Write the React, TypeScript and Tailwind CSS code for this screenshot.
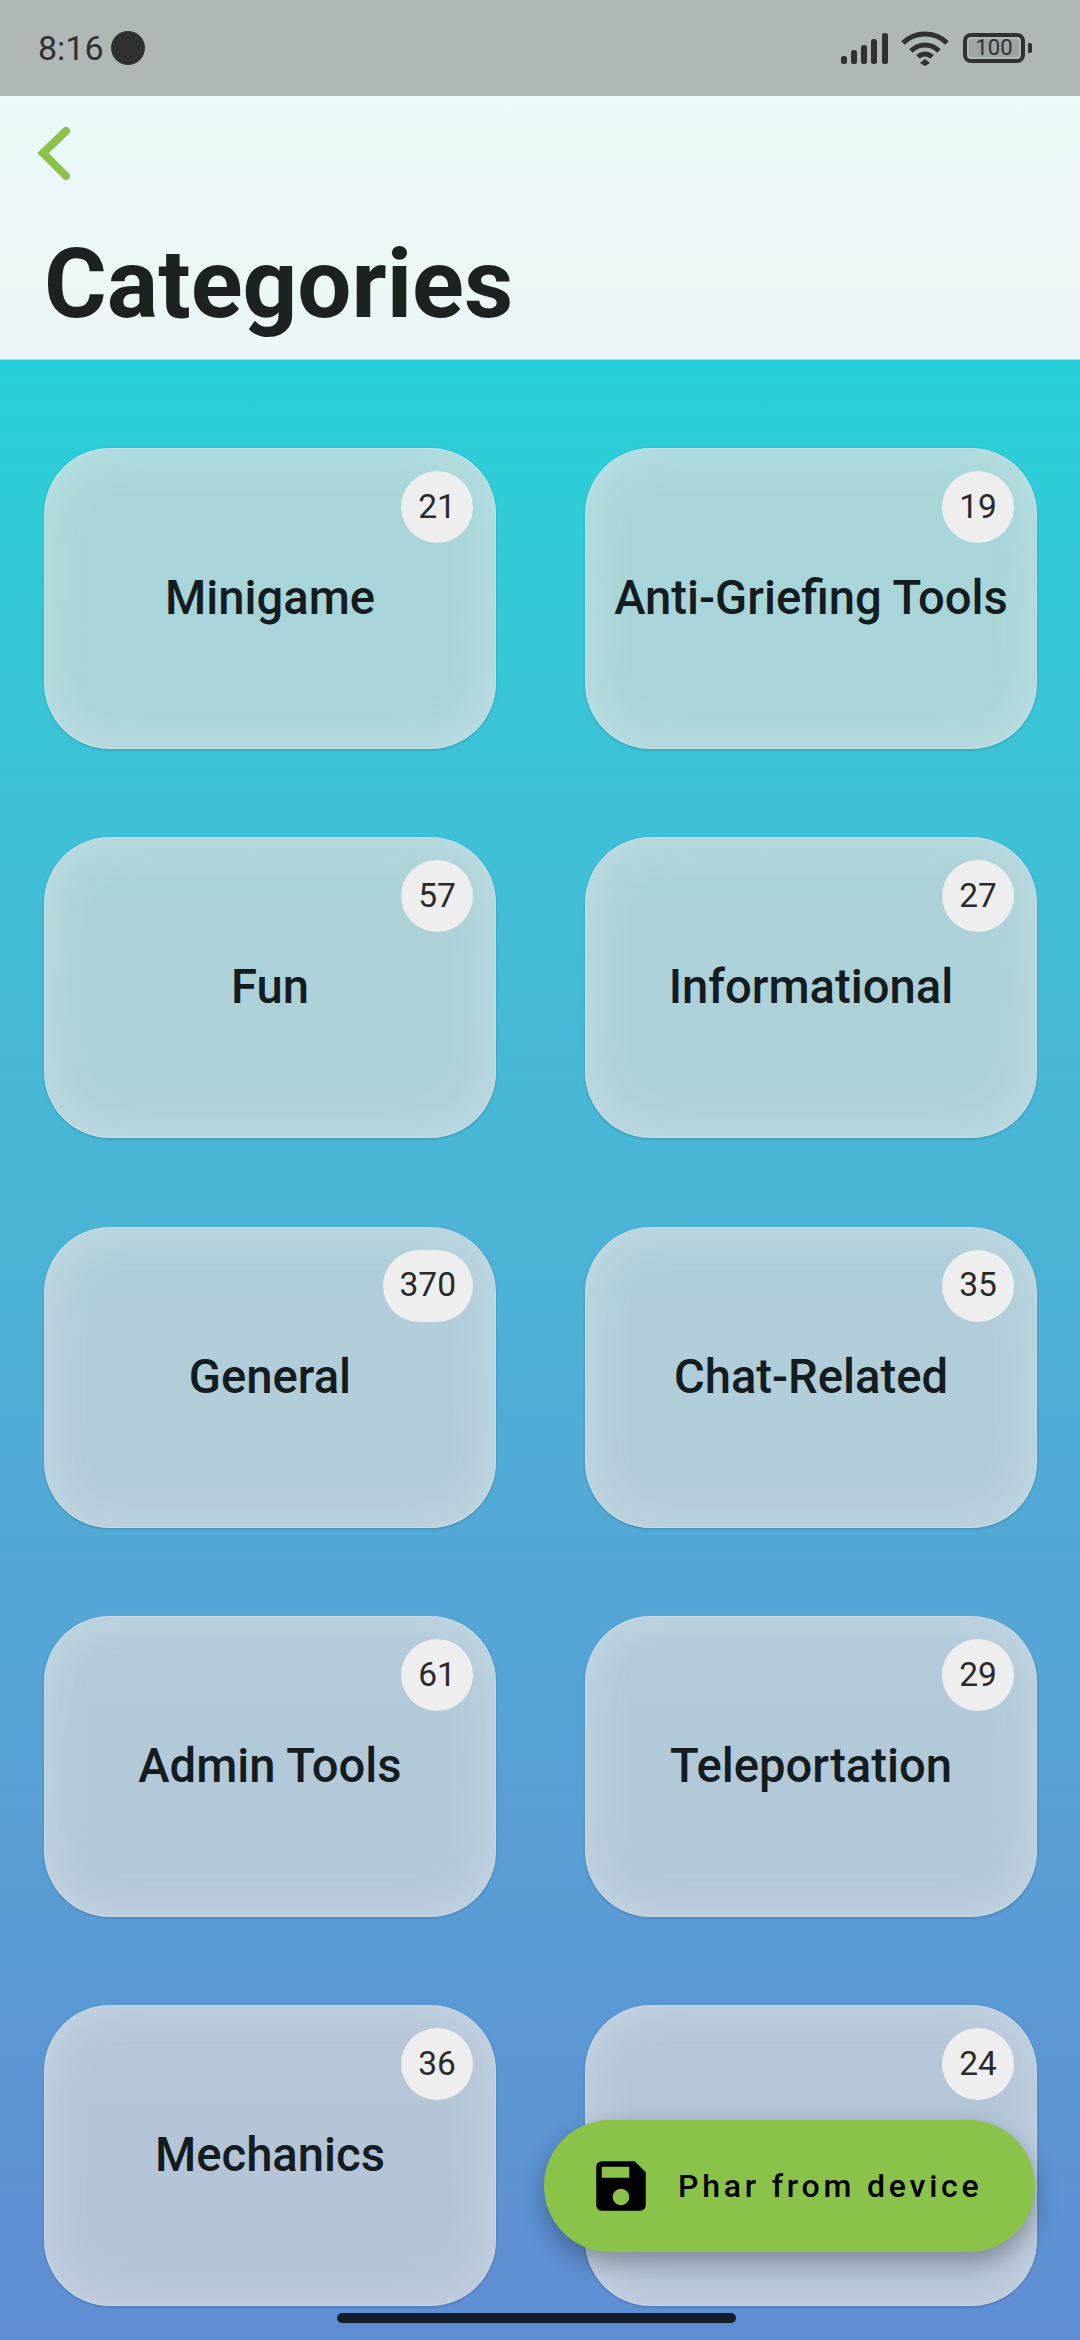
import { MdSave } from "react-icons/md"

const categories = [
	{ name: "Minigame", count: "21" },
	{ name: "Anti-Griefing Tools", count: "19" },
	{ name: "Fun", count: "57" },
	{ name: "Informational", count: "27" },
	{ name: "General", count: "370" },
	{ name: "Chat-Related", count: "35" },
	{ name: "Admin Tools", count: "61" },
	{ name: "Teleportation", count: "29" },
	{ name: "Mechanics", count: "36" },
	{ name: "", count: "24" },
]

function StatusIcons() {
	return (
		<div className="flex items-center">
			<svg width="50" height="32" viewBox="0 0 50 32" className="text-[#2f3231]" fill="currentColor">
				<rect x="1" y="24" width="6" height="8" rx="2.5" />
				<rect x="11" y="18" width="6" height="14" rx="2.5" />
				<rect x="21" y="13" width="6" height="19" rx="2.5" />
				<rect x="31" y="7" width="6" height="25" rx="2.5" />
				<rect x="42" y="1" width="6" height="31" rx="2.5" />
			</svg>
			<svg width="48" height="36" viewBox="0 0 48 36" className="ml-[11px]" fill="none" stroke="#2f3231" strokeWidth="5">
				<path d="M2 13 C14 1 34 1 46 13" />
				<path d="M10 21 C18 13 30 13 38 21" />
				<path d="M17 27 C21 23 27 23 31 27" />
				<path d="M24 29 L29 33 L24 36 L19 33 Z" fill="#2f3231" stroke="none" />
			</svg>
			<div className="ml-[14px] flex items-center">
				<div className="w-[62px] h-[30px] rounded-[8px] border-[4px] border-[#2f3231] p-[2px]">
					<div className="h-full rounded-[3px] bg-[#9ea5a5] flex items-center justify-center text-[22px] leading-none text-[#2f3231] font-['Roboto',sans-serif]">
						100
					</div>
				</div>
				<div className="ml-[3px] w-[4px] h-[10px] rounded-r-[2px] bg-[#2f3231]"></div>
			</div>
		</div>
	)
}

function CategoryCard({ name, count }: { name: string; count: string }) {
	return (
		<div className="relative h-[301px] rounded-[66px] bg-[#dadada]/70 border border-white/30 shadow-[inset_0_0_50px_rgba(255,255,255,0.26),0_1px_3px_rgba(0,0,0,0.2)] flex items-center justify-center">
			<div className="absolute top-[22px] right-[22px] min-w-[72px] h-[72px] px-[17px] rounded-full bg-[#eeeeee] flex items-center justify-center text-[33.5px] text-[#2a2a2a]">
				{count}
			</div>
			<span className="text-[47.2px] font-medium text-[#141c1f]">{name}</span>
		</div>
	)
}

export default function App() {
	return (
		<div className="relative w-[1080px] h-[2340px] overflow-hidden flex flex-col font-['Roboto',sans-serif]">
			<div className="h-[96px] shrink-0 bg-[#b0b8b7] flex items-center justify-between pl-[38px] pr-[48px]">
				<div className="flex items-center gap-[7px]">
					<span className="text-[34px] text-[#2f3231]">8:16</span>
					<div className="w-[34px] h-[34px] rounded-full bg-[#2f3231]"></div>
				</div>
				<StatusIcons />
			</div>

			<div className="h-[264px] shrink-0 bg-gradient-to-b from-[#ebf9f9] to-[#ecf5f7] border-b border-[#c3d3d6] pl-[36px] pt-[30px]">
				<svg width="36" height="54" viewBox="0 0 36 54" fill="none" stroke="#8bc34a" strokeWidth="8" strokeLinecap="round" strokeLinejoin="miter">
					<path d="M30 5 L7 27 L30 50" />
				</svg>
				<h1 className="ml-[8px] mt-[49px] text-[96px] leading-[110px] font-bold text-[#1e2121]">Categories</h1>
			</div>

			<div className="flex-1 bg-gradient-to-b from-[#26d0d8] to-[#5f8dd3] px-[44px] pt-[88px]">
				<div className="grid grid-cols-2 gap-x-[89px] gap-y-[88.3px] w-[993px]">
					{categories.map((item) => (
						<CategoryCard key={item.count} name={item.name} count={item.count} />
					))}
				</div>
			</div>

			<div className="absolute left-[544px] top-[2120px] w-[491px] h-[132px] rounded-full bg-[#8bc34a] shadow-[0_10px_24px_rgba(0,0,0,0.3)] flex items-center pl-[44px]">
				<MdSave size={66} color="#000000" />
				<span className="ml-[24px] text-[32px] font-medium tracking-[3.8px] text-black">Phar from device</span>
			</div>

			<div className="absolute left-[337px] top-[2313px] w-[399px] h-[10px] rounded-full bg-[#131f2b]"></div>
		</div>
	)
}
